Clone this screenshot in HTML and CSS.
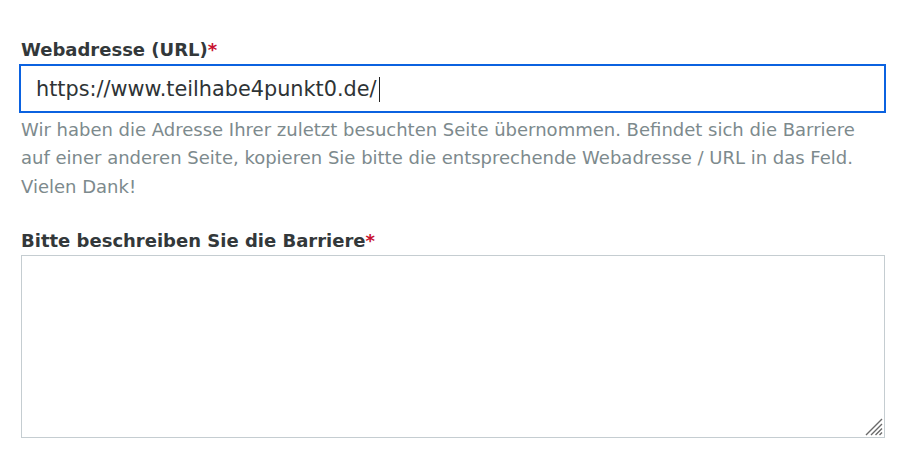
FILE: index.html
```html
<!DOCTYPE html>
<html lang="de">
<head>
<meta charset="utf-8">
<link rel="stylesheet" href="styles.css">
</head>
<body>
<form class="form">
  <div class="field">
    <label class="label">Webadresse (URL)<span class="req">*</span></label>
    <div class="input" role="textbox">https://www.teilhabe4punkt0.de/<span class="caret"></span></div>
    <p class="help">Wir haben die Adresse Ihrer zuletzt besuchten Seite übernommen. Befindet sich die Barriere auf einer anderen Seite, kopieren Sie bitte die entsprechende Webadresse / URL in das Feld. Vielen Dank!</p>
  </div>
  <div class="field second">
    <label class="label">Bitte beschreiben Sie die Barriere<span class="req">*</span></label>
    <div class="textarea" role="textbox">
      <svg class="grip" width="20" height="20" viewBox="0 0 20 20"><path d="M19 3 L3 19 M19 8 L8 19 M19 12.5 L12.5 19 M19 16.5 L16.5 19" stroke="#6a6a6a" stroke-width="1.4"/></svg>
    </div>
  </div>
</form>
</body>
</html>
```
FILE: styles.css
```css
html, body { margin: 0; background: #fff; }
body { font-family: "DejaVu Sans", "Open Sans", sans-serif; color: #333; }
.form { padding: 37px 0 0 21px; width: 864px; }
.field { display: flex; flex-direction: column; }
.label { font-size: 18px; font-weight: 700; line-height: 25px; color: #33383a; margin-bottom: 2px; }
.req { color: #c8102e; }
.input {
  margin: 0 -1px 0 -2px;
  height: 44px;
  border: 2px solid #0b62e0;
  display: flex; align-items: center;
  padding: 1px 0 0 15px;
  box-sizing: content-box;
  font-size: 20.8px;
  color: #2e3335;
}
.caret { display: inline-block; width: 1px; height: 25px; background: #222; margin-left: 2px; }
.help { margin: 2.5px 0 0 0; font-size: 18px; line-height: 28.5px; color: #7d8a8d; }
.second { margin-top: 27px; }
.textarea { position: relative; height: 181px; border: 1px solid #c5cdd1; }
.grip { position: absolute; right: 1px; bottom: 1px; }
```
